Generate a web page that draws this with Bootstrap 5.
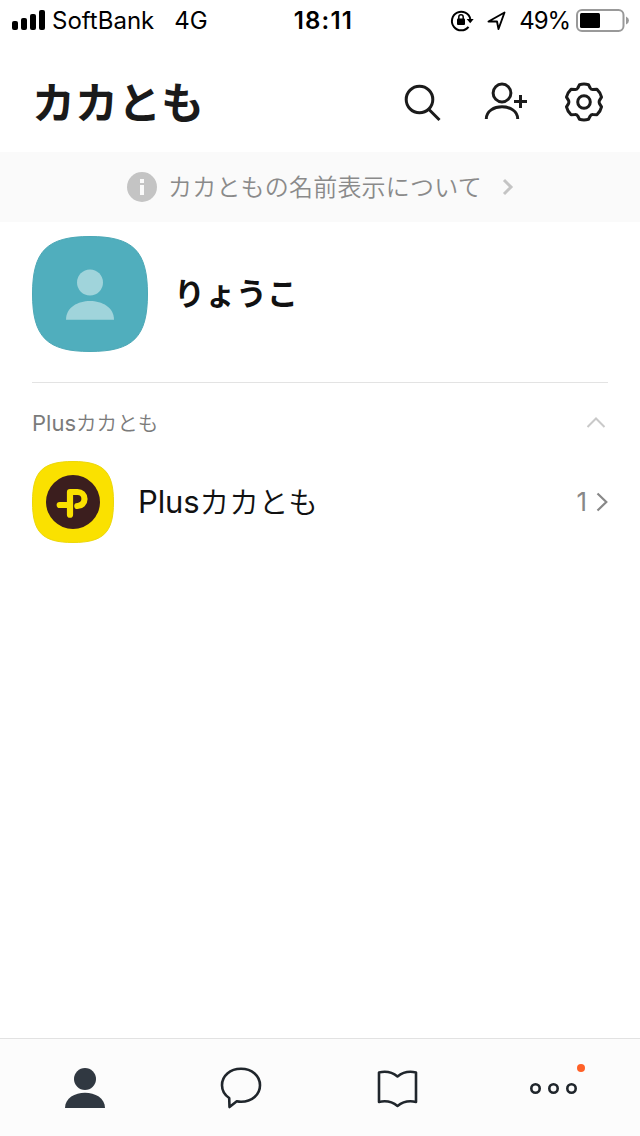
<!DOCTYPE html>
<html lang="ja">
<head>
<meta charset="utf-8">
<meta name="viewport" content="width=device-width, initial-scale=1">
<title>カカとも</title>
<link href="https://cdn.jsdelivr.net/npm/bootstrap@5.3.0/dist/css/bootstrap.min.css" rel="stylesheet">
<style>
body{font-family:Inter,"Noto Sans CJK JP",sans-serif;height:1136px;background:#fff;color:#1a1a1a;overflow:hidden}
svg{display:block;flex:none}
.text-line{white-space:nowrap;line-height:1}
.status{height:40px;color:#000;font-size:24px;padding-left:12px;padding-right:10px}
.status .text-line{padding-top:2px}
.carrier{margin-left:6px}
.network{margin-left:20px}
.percent{margin-left:9px;letter-spacing:-1.1px}
.clock{font-weight:600;margin-left:86px;letter-spacing:1.200px}
.topbar{height:112px;padding:0 36px 0 32px}
.topbar h1{font-size:43px;font-weight:700;padding-top:14px}
.notice{height:70px;background:#fafafa;color:#8a8a8a;padding-left:127px}
.notice-label{font-size:24px;font-weight:350;letter-spacing:.2px;margin-left:11px;padding-top:2px}
.me{height:161px;margin:0 32px;border-bottom:1px solid #e3e3e3;padding-top:14px}
.my-name{font-size:31px;font-weight:700;color:#111;margin:42px 0 0 26px}
.group-head{height:78px;margin:0 32px;color:#7b7b7b;font-size:22px}
.group-head .text-line{padding-top:2px}
.jp-small{font-size:20.6px;font-weight:350}
.friend{height:82px;margin:0 32px;font-size:31px;color:#111}
.friend-name{margin-left:24px;padding-bottom:1px;letter-spacing:-.1px}
.jp-mid{font-size:29.7px;font-weight:350}
.count{font-size:26px;color:#888}
.tabs{height:98px;background:#fcfcfc;border-top:1px solid #e2e2e2;padding:0 8px}
</style>
</head>
<body class="d-flex flex-column m-0">
<div class="status d-flex align-items-center">
  <svg width="34" height="40" viewBox="12 0 34 40"><rect x="12" y="21" width="6" height="9" rx="2"/><rect x="21" y="18" width="6" height="12" rx="2"/><rect x="30" y="14" width="6" height="16" rx="2"/><rect x="39" y="10" width="6" height="20" rx="2"/></svg>
  <span class="text-line carrier">SoftBank</span>
  <span class="text-line network">4G</span>
  <span class="text-line clock">18:11</span>
  <svg class="ms-auto" width="60" height="40" viewBox="450 0 60 40" fill="none" stroke="#000" stroke-width="2"><path d="M468.500 26.800A9.300 9.300 0 1 1 470.300 19"/><path d="M466.700 19h7l-3.500 4.300z" fill="#000" stroke="none"/><rect x="457" y="18.500" width="8" height="6.500" rx="1" fill="#000" stroke="none"/><path d="M458.800 19v-2a2.200 2.200 0 0 1 4.400 0v2" stroke-width="1.500"/><path d="M488.500 21.500L504.500 12.500L498.500 29L497 21.500Z" stroke-width="1.900" stroke-linejoin="round"/></svg>
  <span class="text-line percent">49%</span>
  <svg width="54" height="40" viewBox="576 0 54 40" style="margin-left:6px"><rect x="577" y="10" width="46.500" height="21" rx="5" fill="none" stroke="#999" stroke-width="2"/><rect x="580" y="13" width="20" height="15" rx="1.500"/><path d="M626 16.500q3 1.500 3 4t-3 4z" fill="#999"/></svg>
</div>

<header class="topbar d-flex align-items-center">
  <h1 class="text-line m-0">カカとも</h1>
  <svg class="ms-auto" width="204" height="52" viewBox="400 70 204 52" fill="none" stroke="#1b1b1b" stroke-width="3">
    <circle cx="419.500" cy="99.500" r="13.300"/><path d="M429 109.500L439.500 120"/>
    <circle cx="502" cy="93" r="8.900"/><path d="M486.300 119C486.300 102.800 517.700 102.800 517.700 119"/><path d="M514 101.500h13M520.500 95v13"/>
    <g transform="translate(584 102)" stroke-linejoin="round"><path d="M4.500-17.300L6.200-14Q7.300-12.200 9-12.400L13-12.700Q16.500-9.500 17.500-4.900L15.500-1.600Q14.800 0 15.500 1.600L17.500 4.900Q16.500 9.500 13 12.700L9 12.400Q7.300 12.200 6.200 14L4.500 17.300Q0 18.500-4.500 17.300L-6.200 14Q-7.300 12.200-9 12.400L-13 12.700Q-16.500 9.500-17.500 4.900L-15.500 1.600Q-14.800 0-15.500-1.600L-17.500-4.900Q-16.500-9.500-13-12.700L-9-12.400Q-7.300-12.200-6.200-14L-4.500-17.300Q0-18.500 4.500-17.300Z"/><circle r="6.300"/></g>
  </svg>
</header>

<div class="notice d-flex align-items-center">
  <svg width="30" height="30" viewBox="0 0 30 30"><circle cx="15" cy="15" r="15" fill="#c4c4c4"/><path d="M13 7h4v4h-4zM13 13h4v10h-4z" fill="#fafafa"/></svg>
  <span class="text-line notice-label">カカともの名前表示について</span>
  <svg width="14" height="20" viewBox="0 0 14 20" style="margin-left:18px"><path d="M4 3L11 10L4 17" fill="none" stroke="#c4c4c4" stroke-width="3"/></svg>
</div>

<main class="flex-grow-1">
  <section class="me d-flex align-items-start">
    <svg width="116" height="116" viewBox="0 0 116 116"><path d="M.5 58C.5 15 15 .5 58 .5S115.500 15 115.500 58S101 115.500 58 115.500S.5 101 .5 58Z" fill="#50aebd" stroke="#4ca8b6"/><circle cx="58" cy="46.500" r="13" fill="#a0d4db"/><path d="M34 83.700C34 58.700 82 58.700 82 83.700Z" fill="#a0d4db"/></svg>
    <span class="text-line my-name">りょうこ</span>
  </section>
  <div class="group-head d-flex align-items-center justify-content-between">
    <span class="text-line">Plus<span class="jp-small">カカとも</span></span>
    <svg width="24" height="20" viewBox="584 412 24 20"><path d="M587.500 427L596 418.500L604.500 427" fill="none" stroke="#c9c9c9" stroke-width="2"/></svg>
  </div>
  <div class="friend d-flex align-items-center">
    <svg width="82" height="82" viewBox="32 461 82 82"><path d="M32.500 502C32.500 471.500 42.500 461.500 73 461.500S113.500 471.500 113.500 502S103.500 542.500 73 542.500S32.500 532.500 32.500 502Z" fill="#fae100" stroke="#ecd70a"/><circle cx="73" cy="502" r="27" fill="#3b1e1e"/><g fill="none" stroke="#fae100" stroke-width="6.200" stroke-linecap="round" stroke-linejoin="round"><path d="M70 514.700V492H77.500a7 7 0 0 1 0 14H77.300"/><path d="M59.700 505H68"/></g></svg>
    <span class="text-line friend-name">Plus<span class="jp-mid">カカとも</span></span>
    <span class="text-line count ms-auto">1</span>
    <svg width="14" height="24" viewBox="594 490 14 24" style="margin-left:7px"><path d="M597.500 493.500L606.300 502L597.500 510.500" fill="none" stroke="#888" stroke-width="2.200"/></svg>
  </div>
</main>

<nav class="tabs row row-cols-4 g-0 flex-shrink-0">
  <div class="col"><svg width="156" height="97" viewBox="8 1039 156 97" fill="#303841"><circle cx="85" cy="1079" r="11"/><path d="M65 1108C65 1087.500 105 1087.500 105 1108Z"/></svg></div>
  <div class="col"><svg width="156" height="97" viewBox="164 1039 156 97" fill="none" stroke="#20262c" stroke-width="2.600" stroke-linejoin="round"><path d="M241 1068.800C252 1068.800 260 1076 260 1085.200C260 1094.500 252 1101.700 241 1101.700Q239 1101.700 236.800 1101.200L229.500 1107L229.200 1098C224.800 1095 222 1090.500 222 1085.200C222 1076 230 1068.800 241 1068.800Z"/></svg></div>
  <div class="col"><svg width="156" height="97" viewBox="320 1039 156 97" fill="none" stroke="#20262c" stroke-width="2.600" stroke-linejoin="round"><path d="M397.500 1076.500Q389.500 1070 379 1072.500V1102Q389.500 1099.500 397.500 1106Q405.500 1099.500 416 1102V1072.500Q405.500 1070 397.500 1076.500Z"/></svg></div>
  <div class="col"><svg width="156" height="97" viewBox="476 1039 156 97" fill="none" stroke="#20262c" stroke-width="2.600"><circle cx="535.500" cy="1088.500" r="4.200"/><circle cx="553.500" cy="1088.500" r="4.200"/><circle cx="571.500" cy="1088.500" r="4.200"/><circle cx="581" cy="1068" r="4" fill="#ff6128" stroke="none"/></svg></div>
</nav>
<script src="https://cdn.jsdelivr.net/npm/bootstrap@5.3.0/dist/js/bootstrap.bundle.min.js"></script>
</body>
</html>
